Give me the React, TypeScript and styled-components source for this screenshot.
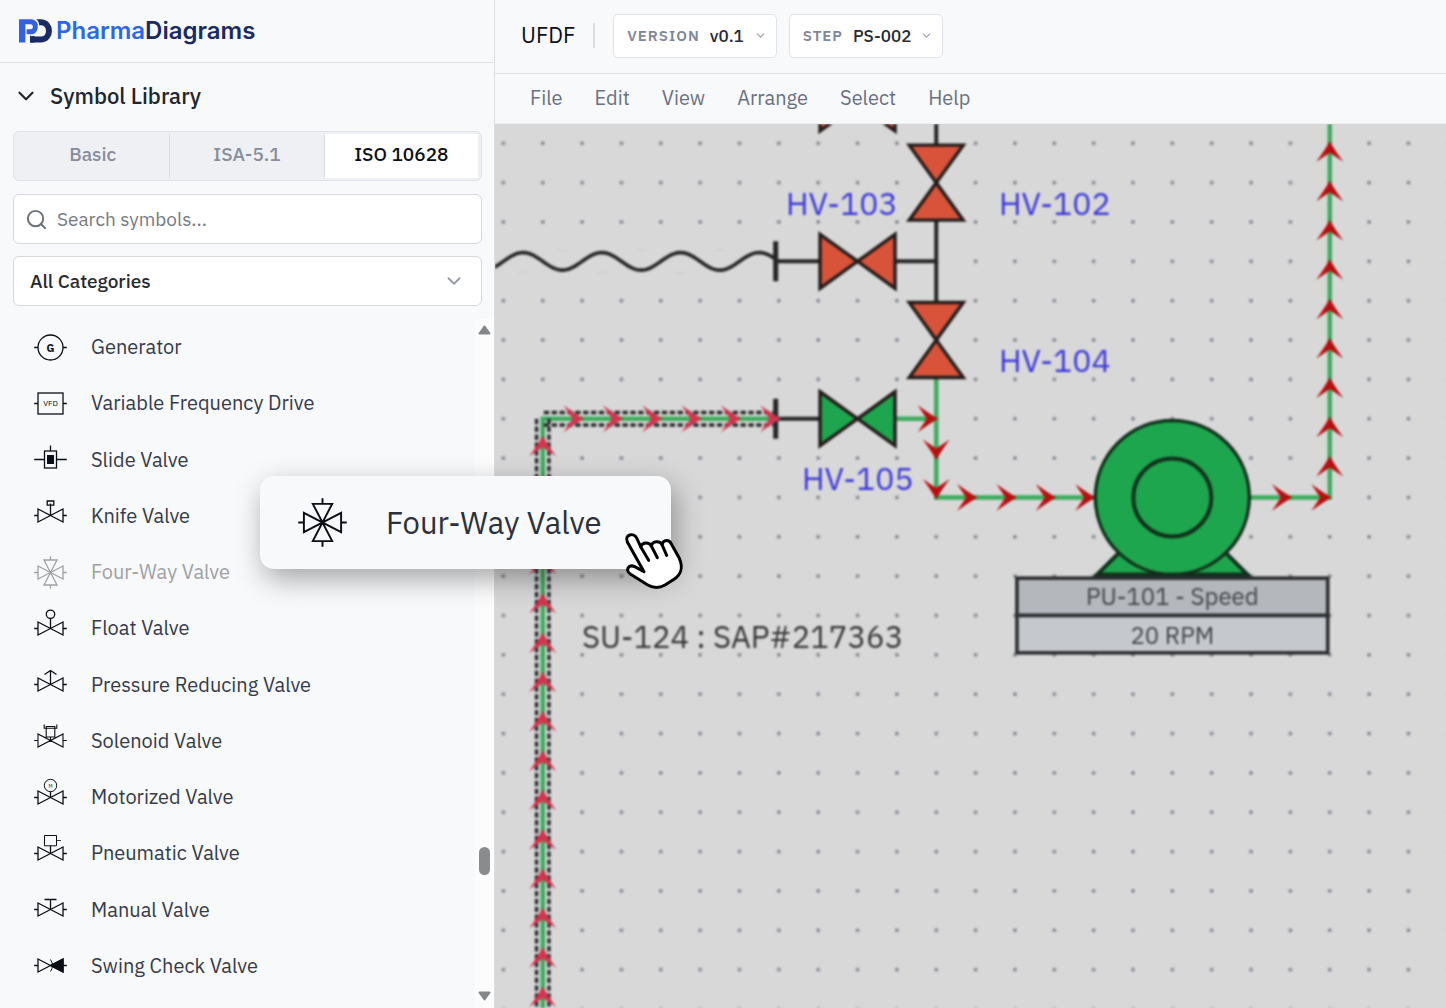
import React, { useId } from "react";
import styled, { createGlobalStyle } from "styled-components";
import { ChevronDown, Search } from "lucide-react";

const FONT = '"IBM Plex Sans", "Noto Sans", sans-serif';

const GlobalStyle = createGlobalStyle`
  *, *::before, *::after { box-sizing: border-box; }
  body { margin: 0; background: #f7f9fb; font-family: ${FONT}; }
  button, input, select { font-family: inherit; }
`;

const Page = styled.div`
  display: flex;
  height: 100vh;
  overflow: hidden;
  position: relative;
`;

const Sidebar = styled.aside`
  width: 495px;
  flex: none;
  display: flex;
  flex-direction: column;
  background: #f7f9fb;
  border-right: 1px solid #dcdee4;
`;

const Brand = styled.header`
  height: 63px;
  flex: none;
  display: flex;
  align-items: center;
  gap: 4px;
  padding: 0 18px 1px;
  border-bottom: 1px solid #e0e2e7;
`;

const BrandName = styled.span`
  font-family: Inter, sans-serif;
  font-size: 24px;
  line-height: 28px;
  font-weight: 600;
  color: #1a2a63;
`;

const BrandAccent = styled.span`
  color: #2b66ee;
`;

const Controls = styled.div`
  flex: none;
  display: flex;
  flex-direction: column;
  gap: 12px;
  padding: 16px 12px 13px 13px;
`;

const SectionToggle = styled.button`
  display: flex;
  align-items: center;
  gap: 11px;
  height: 36px;
  margin-bottom: 4px;
  padding: 0 0 2px;
  border: 0;
  background: none;
  color: #22252c;
  font-size: 22px;
  line-height: 28px;
  font-weight: 500;
`;

const Tabs = styled.div`
  display: flex;
  height: 50px;
  margin-bottom: 1px;
  padding: 2px;
  border: 1px solid #dfe1e7;
  border-radius: 6px;
  background: #eff0f4;
`;

const Tab = styled.button<{ $active?: boolean }>`
  flex: 1;
  padding: 0 0 4px;
  border: 0;
  border-right: 1px solid ${(p) => (p.$active ? "transparent" : "#d9dbe2")};
  background: ${(p) => (p.$active ? "#fff" : "transparent")};
  background-clip: padding-box;
  color: ${(p) => (p.$active ? "#0c0e14" : "#868c9c")};
  font-size: 19px;
  font-weight: 500;
`;

const Field = styled.label`
  display: flex;
  align-items: center;
  gap: 9px;
  height: 50px;
  padding: 0 16px 0 11px;
  border: 1px solid #d5d7dc;
  border-radius: 6px;
  background: #fff;
  color: #686d78;
`;

const SearchInput = styled.input`
  flex: 1;
  min-width: 0;
  padding: 0;
  border: 0;
  outline: 0;
  background: none;
  font-size: 19px;
  color: #22252c;
  &::placeholder { color: #757a83; opacity: 1; }
`;

const Picker = styled.select<{ $size: number; $width?: number }>`
  appearance: none;
  flex: ${(p) => (p.$width ? "none" : "1")};
  width: ${(p) => (p.$width ? `${p.$width}px` : "auto")};
  min-width: 0;
  padding: 0;
  border: 0;
  outline: 0;
  background: none;
  color: #262a33;
  font-size: ${(p) => p.$size}px;
  font-weight: 500;
`;

const CategoryField = styled(Field)`
  padding-left: 16px;
  color: #9599a2;
`;

const ListArea = styled.div`
  flex: 1;
  min-height: 0;
  display: flex;
`;

const SymbolList = styled.ul`
  flex: 1;
  display: grid;
  grid-auto-rows: minmax(48px, 1fr);
  margin: 0;
  padding: 0 0 14px 30px;
  list-style: none;
`;

const SymbolRow = styled.li<{ $faded?: boolean }>`
  display: flex;
  align-items: center;
  gap: 20px;
  font-size: 20px;
  line-height: 26px;
  color: ${(p) => (p.$faded ? "#a0a1a4" : "#363b49")};
`;

const Glyph = styled.svg<{ $size: number; $faded?: boolean }>`
  width: ${(p) => p.$size}px;
  height: ${(p) => p.$size}px;
  flex: none;
  overflow: visible;
  fill: none;
  stroke: ${(p) => (p.$faded ? "#a0a1a4" : "#0c0e16")};
  stroke-width: 1.3;
`;

const ScrollTrack = styled.div`
  width: 19px;
  flex: none;
  display: flex;
  flex-direction: column;
  align-items: center;
  padding: 6px 0 7px;
  background: #fcfcfd;
`;

const ScrollGap = styled.div<{ $grow: number }>`
  flex: ${(p) => p.$grow};
`;

const ScrollThumb = styled.div`
  width: 11px;
  height: 28px;
  border-radius: 6px;
  background: #8a8b8d;
`;

const Main = styled.main`
  flex: 1;
  min-width: 0;
  display: flex;
  flex-direction: column;
`;

const TopBar = styled.header`
  height: 74px;
  flex: none;
  display: flex;
  align-items: center;
  padding: 0 26px 2px;
  border-bottom: 1px solid #dfe1e7;
`;

const Title = styled.h1`
  margin: 0;
  padding-bottom: 1px;
  font-size: 22px;
  line-height: 28px;
  font-weight: 400;
  color: #0c0e14;
`;

const Divider = styled.span`
  width: 2px;
  height: 25px;
  margin: 0 18px;
  background: #dcdee5;
`;

const Chip = styled.label`
  display: flex;
  align-items: center;
  height: 44px;
  margin-right: 12px;
  padding: 0 9px 0 13px;
  border: 1px solid #e0e2e9;
  border-radius: 5px;
  background: #fff;
  color: #9a9eab;
`;

const ChipLabel = styled.span`
  margin-right: 10px;
  font-size: 15px;
  font-weight: 600;
  letter-spacing: 1px;
  color: #7f8698;
`;

const MenuBar = styled.nav`
  height: 50px;
  flex: none;
  display: flex;
  align-items: center;
  gap: 32px;
  padding: 0 35px 2px;
  border-bottom: 1px solid #eceef1;
`;

const MenuButton = styled.button`
  padding: 0;
  border: 0;
  background: none;
  font-size: 20px;
  line-height: 26px;
  color: #6a7080;
`;

const Canvas = styled.section`
  flex: 1;
  min-height: 0;
  overflow: hidden;
  background: #d8d8d8;
`;

const Drawing = styled.svg`
  display: block;
  width: 100%;
  height: 100%;
  filter: blur(1px);
  font-family: ${FONT};
`;

const DragCard = styled.div`
  position: absolute;
  left: 260px;
  top: 476px;
  display: flex;
  align-items: center;
  gap: 33px;
  width: 411px;
  height: 93px;
  padding: 0 0 1px 32px;
  border-radius: 14px;
  background: #f7f9fb;
  box-shadow: 4px 10px 28px rgba(0, 0, 0, 0.34);
  font-size: 31px;
  color: #2b303d;
`;

const Hand = styled.svg`
  position: absolute;
  left: 350px;
  top: 44px;
  width: 90px;
  height: 80px;
`;

/* ---------- Sidebar symbols, drawn around a 0,0 centre ---------- */

const VALVE = "M-16.3 0H-12.5M12.5 0H16.3M-12.5-6.5V6.5L12.5-6.5V6.5Z";

const glyphs: Record<string, React.ReactNode> = {
  "Generator": (
    <>
      <circle r="12.5" />
      <path d="M-16.3 0H-12.5M12.5 0H16.3" />
      <text y="4" textAnchor="middle" fontSize="11" fontWeight="700" fill="#0c0e16" stroke="none">G</text>
    </>
  ),
  "Variable Frequency Drive": (
    <>
      <rect x="-12.5" y="-10.5" width="25" height="21" />
      <path d="M-16.3 0H-12.5M12.5 0H16.3" />
      <text y="2" textAnchor="middle" fontSize="8" fill="#0c0e16" stroke="none">VFD</text>
    </>
  ),
  "Slide Valve": (
    <>
      <rect x="-6" y="-8.5" width="12" height="17" />
      <rect x="-3.5" y="-4.5" width="7" height="9" fill="#0c0e16" stroke="none" />
      <path d="M-16.3 0H-6M6 0H16.3M0-14V-8.5" />
    </>
  ),
  "Knife Valve": <path d={`${VALVE}M0 0V-12M-3.3-14.5H3.3V-10.3H-3.3Z`} />,
  "Four-Way Valve": (
    <path d={`${VALVE}M0-16.3V-12.5M0 12.5V16.3M-6.5-12.5H6.5L-6.5 12.5H6.5Z`} />
  ),
  "Float Valve": (
    <>
      <path d={`${VALVE}M0 0V-10.2`} />
      <circle cy="-14.2" r="4.2" />
    </>
  ),
  "Pressure Reducing Valve": <path d={`${VALVE}M0 0V-14M-6-10L0-14L6-10`} />,
  "Solenoid Valve": (
    <path d={`${VALVE}M0 0V-3.5M-4.3-14H4.3V-3.5H-4.3ZM-6.3-16V-12.3H6.3V-16`} strokeWidth="1.1" />
  ),
  "Motorized Valve": (
    <>
      <path d={`${VALVE}M0 0V-5.8`} />
      <circle cy="-12" r="6.2" strokeWidth="1" />
      <text y="-10" textAnchor="middle" fontSize="5" fill="#0c0e16" stroke="none">M</text>
    </>
  ),
  "Pneumatic Valve": (
    <>
      <path d={`${VALVE}M0 0V-7.7`} />
      <path d="M-6-18H6V-7.7H-6Z" strokeWidth="1" />
      <path d="M6-13H10.5" strokeWidth="0.8" />
    </>
  ),
  "Manual Valve": <path d={`${VALVE}M0 0V-10M-6-10H6`} />,
  "Swing Check Valve": (
    <>
      <path d={VALVE} />
      <path d="M12.5-6.5V6.5L0 0Z" fill="#0c0e16" />
      <path d="M0-6Q4 0 0 6" strokeWidth="1" />
    </>
  ),
};

const names = Object.keys(glyphs);

function SymbolGlyph({ name, size = 41, faded }: { name: string; size?: number; faded?: boolean }) {
  return (
    <Glyph viewBox="-20.5 -20.5 41 41" $size={size} $faded={faded} aria-hidden="true">
      {glyphs[name]}
    </Glyph>
  );
}

/* ---------- Diagram ---------- */

const GRID = 39.35;
const col = (n: number) => 8.4 + n * GRID;
const row = (n: number) => 19.3 + n * GRID;

const RED = "#b80e10";
const PINK = "#d5344e";
const GREEN = "#3aac5c";
const INK = "#262626";

type Direction = "right" | "up" | "down";
const ANGLE: Record<Direction, number> = { right: 0, up: -90, down: 90 };

function Arrow({ c, r, dir, color = RED }: { c: number; r: number; dir: Direction; color?: string }) {
  return (
    <path
      d="M2 0Q-7-5-18.5-13.5L-9.5 0L-18.5 13.5Q-7 5 2 0Z"
      fill={color}
      transform={`translate(${col(c)} ${row(r)}) rotate(${ANGLE[dir]})`}
    />
  );
}

function Valve({ c, r, fill, vertical }: { c: number; r: number; fill: string; vertical?: boolean }) {
  return (
    <path
      d="M-37.5-27L0 0L-37.5 27ZM37.5-27L0 0L37.5 27Z"
      fill={fill}
      stroke="#241c1a"
      strokeWidth="3.4"
      transform={`translate(${col(c)} ${row(r)}) rotate(${vertical ? 90 : 0})`}
    />
  );
}

function wave() {
  const points: string[] = [];
  for (let x = -8; x <= col(6.94); x += 2) {
    const y = row(3) - 8.8 * Math.sin((Math.PI * (x - col(0))) / GRID);
    points.push(`${x},${y.toFixed(2)}`);
  }
  return points.join(" ");
}

const range = (from: number, to: number) =>
  Array.from({ length: to - from + 1 }, (_, i) => from + i);

function Diagram() {
  const dots = useId();
  return (
    <Drawing role="img" aria-label="Process diagram">
      <defs>
        <pattern id={dots} x={col(0) - GRID / 2} y={row(0) - GRID / 2} width={GRID} height={GRID} patternUnits="userSpaceOnUse">
          <circle cx={GRID / 2} cy={GRID / 2} r="2" fill="#848995" />
        </pattern>
      </defs>
      <rect width="100%" height="100%" fill="#d8d8d8" />
      <rect width="100%" height="100%" fill={`url(#${dots})`} />
      <rect y={row(3) - 5} width={col(7)} height="10" fill="#d8d8d8" />

      <path
        d={[1.5, 3.5, 5.5].map((n) => `M${col(n) - 5} ${row(3) - 11}h10M${col(n - 1) - 5} ${row(3) + 11}h10`).join("")}
        stroke="#cbcbcb"
      />
      <polyline points={wave()} fill="none" stroke={INK} strokeWidth="3.6" />

      <g stroke={INK} strokeWidth="4" fill="none">
        <path d={`M${col(6.92)} ${row(3)}H${col(11)}M${col(6.92)} ${row(7)}H${col(9)}`} />
        <path d={`M${col(11)} -4V${row(6)}`} />
      </g>

      <g stroke={GREEN} strokeWidth="4.4" fill="none">
        <path d={`M${col(9)} ${row(7)}H${col(11)}`} />
        <path d={`M${col(11)} ${row(6)}V${row(9)}H${col(21)}V-4`} />
        <path d={`M${col(6.92)} ${row(7)}H${col(1)}V1200`} />
      </g>
      <g stroke="#2a2a2a" strokeWidth="3.4" strokeDasharray="5.4 2.47" fill="none">
        <path d={`M${col(1) + 1} ${row(7) - 6.2}H${col(6.85)}M${col(1) + 1} ${row(7) + 6.2}H${col(6.85)}`} />
        <path d={`M${col(1) - 6.2} ${row(7)}V1200M${col(1) + 6.2} ${row(7)}V1200`} />
      </g>
      <path d={`M${col(6.92)} ${row(3) - 20}v40M${col(6.92)} ${row(7) - 20}v40`} stroke={INK} strokeWidth="5" />

      {range(2, 7).map((c) => <Arrow key={c} c={c} r={7} dir="right" color={PINK} />)}
      {range(7, 28).map((r) => <Arrow key={r} c={1} r={r + 0.48} dir="up" color={PINK} />)}
      {range(0, 8).map((r) => <Arrow key={r} c={21} r={r} dir="up" />)}
      {[12, 13, 14, 15, 20, 21].map((c) => <Arrow key={c} c={c} r={9} dir="right" />)}
      <Arrow c={11} r={7} dir="right" />
      <Arrow c={11} r={8} dir="down" />
      <Arrow c={11} r={9} dir="down" />

      <Valve c={9} r={-1} fill="#d9533a" />
      <Valve c={11} r={1} fill="#d9533a" vertical />
      <Valve c={9} r={3} fill="#d9533a" />
      <Valve c={11} r={5} fill="#d9533a" vertical />
      <Valve c={9} r={7} fill="#1ea64e" />

      <g transform={`translate(${col(17)} ${row(9)})`} fill="#1ea64e" stroke="#10301b">
        <path d="M-75 77L-38 40H38L75 77Z" strokeWidth="4" />
        <circle r="77" strokeWidth="3.4" />
        <circle r="39" strokeWidth="4" />
        <path d="M-77 78H77" strokeWidth="5" />
      </g>

      <g stroke="#2c2d2f" strokeWidth="3.6">
        <rect x={col(13) + 2} y={row(11) + 2} width={GRID * 8 - 4} height={GRID - 2} fill="#b4b8bd" />
        <rect x={col(13) + 2} y={row(12)} width={GRID * 8 - 4} height={GRID - 2} fill="#c5c9ce" />
      </g>
      <g fill="#404347" fontSize="24" textAnchor="middle">
        <text x={col(17)} y="481">PU-101 - Speed</text>
        <text x={col(17)} y="520">20 RPM</text>
      </g>
      <g fill="#3a37d8" fontSize="32">
        <text x="291" y="91">HV-103</text>
        <text x="504" y="91">HV-102</text>
        <text x="504" y="248">HV-104</text>
        <text x="307" y="366">HV-105</text>
      </g>
      <text x="87" y="524" fontSize="31" fill="#363636">SU-124 : SAP#217363</text>
    </Drawing>
  );
}

function BrandMark() {
  return (
    <svg width="34" height="26" viewBox="18 16 34 26" fill="none" aria-hidden="true">
      <path d="M35.5 20.2H40.5C51.8 20.2 51.8 37.6 40.5 37.6H30" stroke="#1a2a63" strokeWidth="6" />
      <path d="M30 33.6H34.5V40.6H30Z" fill="#1a2a63" />
      <path d="M31 16.2C41.2 16.2 41.2 33.4 31 33.4" stroke="#f7f9fb" strokeWidth="1.8" />
      <path
        d="M19 17.2H31.2C40 17.4 40 32.2 31.2 32.3H26.6V27.2H30.6C33.6 27 33.6 22.3 30.6 22.2H25.4V40.6H19Z"
        fill="#3461e2"
      />
    </svg>
  );
}

export default function App() {
  return (
    <Page>
      <GlobalStyle />
      <Sidebar>
        <Brand>
          <BrandMark />
          <BrandName><BrandAccent>Pharma</BrandAccent>Diagrams</BrandName>
        </Brand>
        <Controls>
          <SectionToggle aria-expanded="true">
            <ChevronDown size={26} strokeWidth={2} />
            Symbol Library
          </SectionToggle>
          <Tabs role="tablist">
            <Tab role="tab">Basic</Tab>
            <Tab role="tab">ISA-5.1</Tab>
            <Tab role="tab" aria-selected="true" $active>ISO 10628</Tab>
          </Tabs>
          <Field>
            <Search size={23} strokeWidth={2} />
            <SearchInput type="search" placeholder="Search symbols..." aria-label="Search symbols" />
          </Field>
          <CategoryField>
            <Picker $size={19} aria-label="Category" defaultValue="all">
              <option value="all">All Categories</option>
            </Picker>
            <ChevronDown size={22} strokeWidth={2} />
          </CategoryField>
        </Controls>
        <ListArea>
          <SymbolList>
            {names.map((name) => {
              const faded = name === "Four-Way Valve";
              return (
                <SymbolRow key={name} $faded={faded}>
                  <SymbolGlyph name={name} faded={faded} />
                  {name}
                </SymbolRow>
              );
            })}
          </SymbolList>
          <ScrollTrack aria-hidden="true">
            <svg width="13" height="10"><path d="M6.5 1.5L11.5 8.5H1.5Z" fill="#858688" stroke="#858688" strokeWidth="2" strokeLinejoin="round" /></svg>
            <ScrollGap $grow={512} />
            <ScrollThumb />
            <ScrollGap $grow={116} />
            <svg width="13" height="10"><path d="M6.5 8.5L11.5 1.5H1.5Z" fill="#858688" stroke="#858688" strokeWidth="2" strokeLinejoin="round" /></svg>
          </ScrollTrack>
        </ListArea>
      </Sidebar>

      <Main>
        <TopBar>
          <Title>UFDF</Title>
          <Divider />
          <Chip>
            <ChipLabel>VERSION</ChipLabel>
            <Picker $size={17} $width={44} defaultValue="v0.1"><option>v0.1</option></Picker>
            <ChevronDown size={13} strokeWidth={2} />
          </Chip>
          <Chip>
            <ChipLabel>STEP</ChipLabel>
            <Picker $size={17} $width={67} defaultValue="PS-002"><option>PS-002</option></Picker>
            <ChevronDown size={13} strokeWidth={2} />
          </Chip>
        </TopBar>
        <MenuBar aria-label="Main menu">
          {["File", "Edit", "View", "Arrange", "Select", "Help"].map((item) => (
            <MenuButton key={item}>{item}</MenuButton>
          ))}
        </MenuBar>
        <Canvas>
          <Diagram />
        </Canvas>
      </Main>

      <DragCard>
        <SymbolGlyph name="Four-Way Valve" size={61} />
        Four-Way Valve
        <Hand viewBox="0 0 270 240" aria-hidden="true">
          <path
            d="M52 66C42 44 72 36 80 54L92 80C98 66 118 66 124 78C128 62 150 62 156 74C160 58 178 58 184 72L208 115C220 142 212 165 192 178L165 195C145 206 130 205 112 194L62 163C44 150 56 132 74 140L102 155Z"
            fill="#fff" stroke="#000" strokeWidth="9" strokeLinejoin="round"
          />
          <path d="M92 80L116 121M124 78L142 113M156 74L170 106" stroke="#000" strokeWidth="9" strokeLinecap="round" />
        </Hand>
      </DragCard>
    </Page>
  );
}
